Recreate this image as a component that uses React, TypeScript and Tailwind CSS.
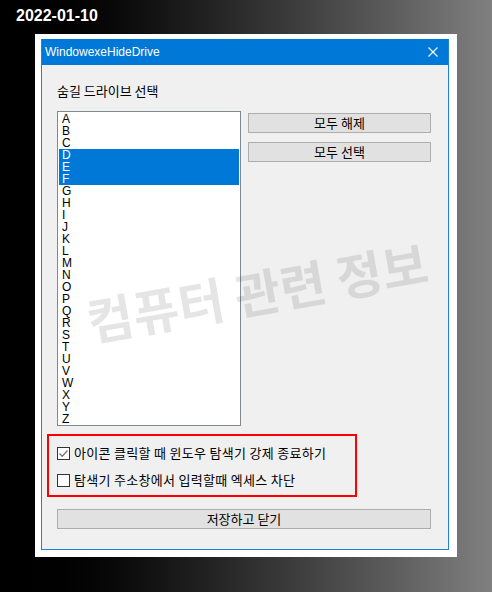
const letters = 'ABCDEFGHIJKLMNOPQRSTUVWXYZ'.split('');
const selected = ['D', 'E', 'F'];

function CheckBox({ checked }: { checked?: boolean }) {
  return (
    <span className="w-[13px] h-[13px] border border-[#333333] bg-white flex items-center justify-center shrink-0">
      {checked && (
        <svg width="11" height="11" viewBox="0 0 11 11">
          <path d="M1.5 5.5 L4.2 8.2 L9.5 2.5" fill="none" stroke="#777777" strokeWidth="1.3" />
        </svg>
      )}
    </span>
  );
}

export default function App() {
  return (
    <div className="relative w-[492px] h-[592px] overflow-hidden bg-gradient-to-r from-black to-[#808080] font-['Liberation_Sans','Noto_Sans_CJK_KR',sans-serif]">
      <div className="h-[34px] pl-[16px] pt-[7px] text-[16px] leading-[18px] font-bold text-white [text-shadow:0_0_2px_#000,0_0_1px_#000]">
        2022-01-10
      </div>

      <div className="ml-[35px] w-[422px] h-[523px] bg-white pl-[6px] pt-[5px]">
        <div className="w-[408px] h-[511px] bg-[#1f82d8] px-px pb-px flex flex-col">
          {/* title bar */}
          <div className="h-[26px] bg-[#0078d7] flex items-center justify-between pl-[3px] pr-[10px] text-white text-[12px]">
            <span>WindowexeHideDrive</span>
            <svg width="10" height="10" viewBox="0 0 10 10">
              <path d="M0.5 0.5 L9.5 9.5 M9.5 0.5 L0.5 9.5" stroke="#ffffff" strokeWidth="1.1" />
            </svg>
          </div>

          {/* client area */}
          <div className="flex-1 bg-[#f0f0f0] pl-[5px] pt-[18px] text-[13px] text-black font-['Noto_Sans_CJK_KR',sans-serif]">
            <div className="ml-[10px] leading-[16px]">숨길 드라이브 선택</div>

            <div className="ml-[10px] mt-[12px] flex gap-[7px]">
              <div className="w-[184px] h-[315px] border border-[#828790] bg-white p-px overflow-hidden font-['Liberation_Sans',sans-serif]">
                {letters.map((l) => (
                  <div
                    key={l}
                    className={
                      selected.includes(l)
                        ? 'h-[12px] leading-[12px] text-[12px] pl-[3px] bg-[#0078d7] text-white'
                        : 'h-[12px] leading-[12px] text-[12px] pl-[3px]'
                    }
                  >
                    {l}
                  </div>
                ))}
              </div>
              <div className="pt-[2px] flex flex-col gap-[9px]">
                <button className="w-[183px] h-[20px] bg-[#e1e1e1] border border-[#adadad] text-[13px] leading-[18px]">
                  모두 해제
                </button>
                <button className="w-[183px] h-[20px] bg-[#e1e1e1] border border-[#adadad] text-[13px] leading-[18px]">
                  모두 선택
                </button>
              </div>
            </div>

            <div className="mt-[8px] w-[310px] h-[63px] border-2 border-[#ff0000] pl-[8px] pt-[7px] flex flex-col gap-[7px] tracking-[0.3px]">
              <label className="h-[20px] flex items-center gap-[4px]">
                <CheckBox checked />
                <span>아이콘 클릭할 때 윈도우 탐색기 강제 종료하기</span>
              </label>
              <label className="h-[20px] flex items-center gap-[4px]">
                <CheckBox />
                <span>탐색기 주소창에서 입력할때 엑세스 차단</span>
              </label>
            </div>

            <button className="ml-[10px] mt-[12px] w-[374px] h-[20px] bg-[#e1e1e1] border border-[#adadad] text-[13px] leading-[18px]">
              저장하고 닫기
            </button>
          </div>
        </div>
      </div>

      {/* watermark */}
      <div className="pointer-events-none absolute left-[257px] top-[290px] -translate-x-1/2 -translate-y-1/2 rotate-[-10deg] whitespace-nowrap text-[50px] leading-none font-bold text-black/10 font-['Noto_Sans_CJK_KR',sans-serif]">
        컴퓨터 관련 정보
      </div>
    </div>
  );
}
